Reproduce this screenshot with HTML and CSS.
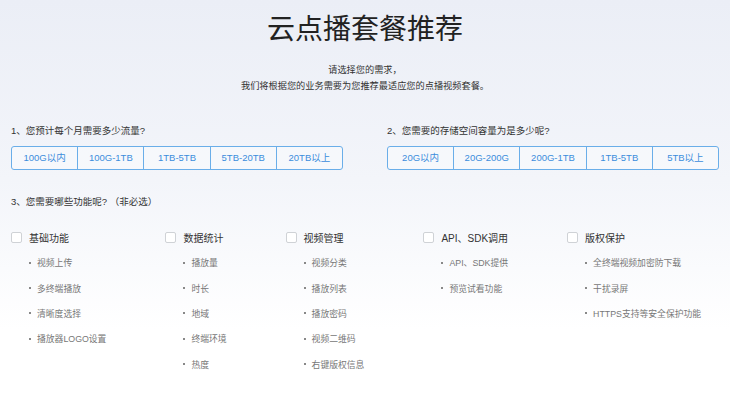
FILE: index.html
```html
<!DOCTYPE html>
<html lang="zh">
<head>
    <meta charset="UTF-8">
    <meta name="viewport" content="width=device-width, initial-scale=1.0">
    <title>云点播套餐推荐</title>
    <link rel="stylesheet" href="styles.css">
</head>
<body>
<h1 class="title">云点播套餐推荐</h1>
<p class="intro">请选择您的需求，<br>我们将根据您的业务需要为您推荐最适应您的点播视频套餐。</p>

<div class="questions">
    <div class="question">
        <div class="q-label">1、您预计每个月需要多少流量?</div>
        <div class="options">
            <span class="option">100G以内</span>
            <span class="option">100G-1TB</span>
            <span class="option">1TB-5TB</span>
            <span class="option">5TB-20TB</span>
            <span class="option">20TB以上</span>
        </div>
    </div>
    <div class="question">
        <div class="q-label">2、您需要的存储空间容量为是多少呢?</div>
        <div class="options">
            <span class="option">20G以内</span>
            <span class="option">20G-200G</span>
            <span class="option">200G-1TB</span>
            <span class="option">1TB-5TB</span>
            <span class="option">5TB以上</span>
        </div>
    </div>
</div>

<div class="q-label q3">3、您需要哪些功能呢? （非必选）</div>

<div class="features">
    <div class="feature">
        <label class="feature-head"><span class="check"></span>基础功能</label>
        <ul class="feature-list">
            <li>视频上传</li>
            <li>多终端播放</li>
            <li>清晰度选择</li>
            <li>播放器LOGO设置</li>
        </ul>
    </div>
    <div class="feature">
        <label class="feature-head"><span class="check"></span>数据统计</label>
        <ul class="feature-list">
            <li>播放量</li>
            <li>时长</li>
            <li>地域</li>
            <li>终端环境</li>
            <li>热度</li>
        </ul>
    </div>
    <div class="feature">
        <label class="feature-head"><span class="check"></span>视频管理</label>
        <ul class="feature-list">
            <li>视频分类</li>
            <li>播放列表</li>
            <li>播放密码</li>
            <li>视频二维码</li>
            <li>右键版权信息</li>
        </ul>
    </div>
    <div class="feature">
        <label class="feature-head"><span class="check"></span>API、SDK调用</label>
        <ul class="feature-list">
            <li>API、SDK提供</li>
            <li>预览试看功能</li>
        </ul>
    </div>
    <div class="feature">
        <label class="feature-head"><span class="check"></span>版权保护</label>
        <ul class="feature-list">
            <li>全终端视频加密防下载</li>
            <li>干扰录屏</li>
            <li>HTTPS支持等安全保护功能</li>
        </ul>
    </div>
</div>
</body>
</html>
```

FILE: styles.css
```css
html {
    background: #fff
}

body {
    margin: 0;
    padding: 0 11px;
    min-height: 397px;
    box-sizing: border-box;
    font-family: "Liberation Sans", "Noto Sans CJK SC", sans-serif;
    color: #333;
    background: linear-gradient(#ebeef6 0, #f3f5fa 180px, #fff 330px)
}

.title {
    margin: 0;
    padding-top: 13px;
    font-size: 28px;
    line-height: 34px;
    font-weight: normal;
    text-align: center;
    color: #222
}

.intro {
    margin: 16px 0 0;
    font-size: 9.2px;
    line-height: 15.6px;
    text-align: center;
    color: #333
}

.questions {
    display: grid;
    grid-template-columns: 332px 332px;
    gap: 44px;
    margin-top: 30px
}

.q-label {
    font-size: 9.5px;
    line-height: 14px;
    color: #333
}

.options {
    display: flex;
    margin-top: 8px;
    border: 1px solid #6aaee9;
    border-radius: 3px;
    background: rgba(255, 255, 255, .35)
}

.option {
    flex: 1;
    height: 22px;
    line-height: 22px;
    text-align: center;
    font-size: 9.5px;
    color: #3b8ddc;
    cursor: pointer
}

.option + .option {
    border-left: 1px solid #6aaee9
}

.q3 {
    margin-top: 25px
}

.features {
    display: flex;
    gap: 59px;
    margin-top: 16px
}

.feature-head {
    display: flex;
    align-items: center;
    gap: 7px;
    height: 25px;
    font-size: 10px;
    color: #333
}

.check {
    width: 9px;
    height: 9px;
    border: 1px solid #cfd2d6;
    border-radius: 2px;
    background: #fff
}

.feature-list {
    list-style: none;
    margin: 0;
    padding: 0 0 0 18px
}

.feature-list li {
    display: flex;
    align-items: center;
    gap: 6px;
    height: 25.3px;
    font-size: 8.8px;
    color: #777
}

.feature-list li::before {
    content: "";
    width: 2px;
    height: 2px;
    background: #888
}
```
